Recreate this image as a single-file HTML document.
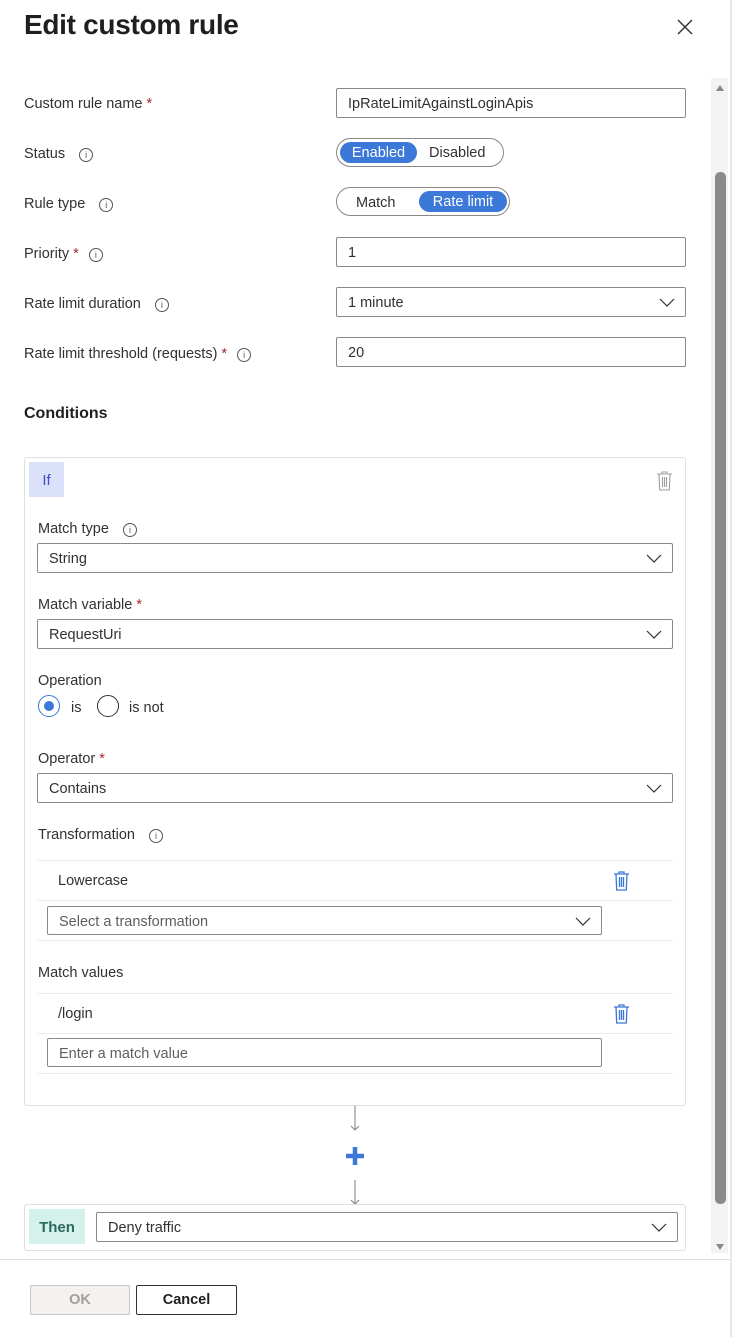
<!DOCTYPE html>
<html><head><style>
*{box-sizing:border-box;margin:0;padding:0}
body{width:732px;height:1337px;background:#fff;font-family:"Liberation Sans",sans-serif;color:#323130;position:relative;overflow:hidden;font-size:14px}
.a{position:absolute}
.lbl{position:absolute;left:24px;font-size:14.5px;color:#323130}
.req{color:#a4262c}
.info{display:inline-block;width:14px;height:14px;border:1px solid #555;border-radius:50%;font-size:9px;line-height:12px;text-align:center;vertical-align:0px;margin-left:10px;color:#555}
.inp{position:absolute;border:1px solid #8a8886;border-radius:2px;background:#fff;font-size:14.5px;padding-left:11px;padding-top:2px;display:flex;align-items:center;color:#323130}
.chev{position:absolute;right:10px;top:50%;margin-top:-7px}
.ph{color:#605e5c}
.hr{position:absolute;height:1px;background:#edebe9}
.trash{position:absolute}
</style></head><body>
<div class="a" style="left:24px;top:9px;font-size:28px;font-weight:bold;color:#201f1e;letter-spacing:-0.3px">Edit custom rule</div>
<svg class="a" style="left:677px;top:19px" width="16" height="16"><path d="M1 1L15 15M15 1L1 15" stroke="#323130" stroke-width="1.4"/></svg>

<div class="a" style="left:711px;top:78px;width:17px;height:1175px;background:#f3f3f3"></div>
<div class="a" style="left:715px;top:172px;width:11px;height:1032px;background:#8a8a8a;border-radius:5px"></div>
<svg class="a" style="left:715px;top:84px" width="10" height="8"><path d="M1 7L5 1L9 7Z" fill="#888"/></svg>
<svg class="a" style="left:715px;top:1243px" width="10" height="8"><path d="M1 1L5 7L9 1Z" fill="#888"/></svg>

<div class="lbl" style="top:96px">Custom rule name <span class="req">*</span></div>
<div class="inp" style="left:336px;top:88px;width:350px;height:30px">IpRateLimitAgainstLoginApis</div>

<div class="lbl" style="top:146px">Status <span class="info">i</span></div>
<div class="a" style="left:336px;top:138px;width:168px;height:29px;border:1px solid #8a8886;border-radius:15px"></div>
<div class="a" style="left:340px;top:142px;width:77px;height:21px;background:#3b78d8;border-radius:11px;color:#fff;font-size:14.5px;text-align:center;line-height:22px">Enabled</div>
<div class="a" style="left:429px;top:145px;font-size:14.5px">Disabled</div>

<div class="lbl" style="top:196px">Rule type <span class="info">i</span></div>
<div class="a" style="left:336px;top:187px;width:174px;height:29px;border:1px solid #8a8886;border-radius:15px"></div>
<div class="a" style="left:356px;top:195px;font-size:14.5px">Match</div>
<div class="a" style="left:419px;top:191px;width:88px;height:21px;background:#3b78d8;border-radius:11px;color:#fff;font-size:14.5px;text-align:center;line-height:22px">Rate limit</div>

<div class="lbl" style="top:246px">Priority <span class="req">*</span> <span class="info" style="margin-left:6px">i</span></div>
<div class="inp" style="left:336px;top:237px;width:350px;height:30px">1</div>

<div class="lbl" style="top:296px">Rate limit duration <span class="info">i</span></div>
<div class="inp" style="left:336px;top:287px;width:350px;height:30px">1 minute<svg class="chev" width="16" height="14"><path d="M1 4L8 11L15 4" fill="none" stroke="#323130" stroke-width="1.2"/></svg></div>

<div class="lbl" style="top:346px">Rate limit threshold (requests) <span class="req">*</span> <span class="info" style="margin-left:6px">i</span></div>
<div class="inp" style="left:336px;top:337px;width:350px;height:30px">20</div>

<div class="a" style="left:24px;top:405px;font-size:16px;font-weight:bold;color:#201f1e">Conditions</div>

<div class="a" style="left:24px;top:457px;width:662px;height:649px;border:1px solid #e1dfdd;border-radius:3px"></div>
<div class="a" style="left:29px;top:462px;width:35px;height:35px;background:#dbe1fa;color:#3b4fc4;font-size:15px;line-height:37px;text-align:center">If</div>
<svg class="trash" style="left:656px;top:471px" width="17" height="20"><path d="M1 3H16M6 3V1H11V3M3 3L3.7 19H13.3L14 3M6.5 6V16M8.5 6V16M10.5 6V16" fill="none" stroke="#a19f9d" stroke-width="1.1"/></svg>

<div class="a" style="left:38px;top:521px;font-size:14.5px">Match type <span class="info">i</span></div>
<div class="inp" style="left:37px;top:543px;width:636px;height:30px">String<svg class="chev" width="16" height="14"><path d="M1 4L8 11L15 4" fill="none" stroke="#323130" stroke-width="1.2"/></svg></div>

<div class="a" style="left:38px;top:597px;font-size:14.5px">Match variable <span class="req">*</span></div>
<div class="inp" style="left:37px;top:619px;width:636px;height:30px">RequestUri<svg class="chev" width="16" height="14"><path d="M1 4L8 11L15 4" fill="none" stroke="#323130" stroke-width="1.2"/></svg></div>

<div class="a" style="left:38px;top:673px;font-size:14.5px">Operation</div>
<div class="a" style="left:38px;top:695px;width:22px;height:22px;border:1px solid #3b78d8;border-radius:50%"></div>
<div class="a" style="left:44px;top:701px;width:10px;height:10px;background:#3b78d8;border-radius:50%"></div>
<div class="a" style="left:71px;top:700px;font-size:14.5px">is</div>
<div class="a" style="left:97px;top:695px;width:22px;height:22px;border:1px solid #323130;border-radius:50%"></div>
<div class="a" style="left:129px;top:700px;font-size:14.5px">is not</div>

<div class="a" style="left:38px;top:751px;font-size:14.5px">Operator <span class="req">*</span></div>
<div class="inp" style="left:37px;top:773px;width:636px;height:30px">Contains<svg class="chev" width="16" height="14"><path d="M1 4L8 11L15 4" fill="none" stroke="#323130" stroke-width="1.2"/></svg></div>

<div class="a" style="left:38px;top:827px;font-size:14.5px">Transformation <span class="info">i</span></div>
<div class="hr" style="left:37px;top:860px;width:636px"></div>
<div class="a" style="left:58px;top:873px;font-size:14.5px">Lowercase</div>
<svg class="trash" style="left:613px;top:871px" width="17" height="20"><path d="M1 3H16M6 3V1H11V3M3 3L3.7 19H13.3L14 3M6.5 6V16M8.5 6V16M10.5 6V16" fill="none" stroke="#3b78d8" stroke-width="1.3"/></svg>
<div class="hr" style="left:37px;top:900px;width:636px"></div>
<div class="inp" style="left:47px;top:906px;width:555px;height:29px"><span class="ph">Select a transformation</span><svg class="chev" width="16" height="14"><path d="M1 4L8 11L15 4" fill="none" stroke="#323130" stroke-width="1.2"/></svg></div>
<div class="hr" style="left:37px;top:940px;width:636px"></div>

<div class="a" style="left:38px;top:965px;font-size:14.5px">Match values</div>
<div class="hr" style="left:37px;top:993px;width:636px"></div>
<div class="a" style="left:58px;top:1006px;font-size:14.5px">/login</div>
<svg class="trash" style="left:613px;top:1004px" width="17" height="20"><path d="M1 3H16M6 3V1H11V3M3 3L3.7 19H13.3L14 3M6.5 6V16M8.5 6V16M10.5 6V16" fill="none" stroke="#3b78d8" stroke-width="1.3"/></svg>
<div class="hr" style="left:37px;top:1033px;width:636px"></div>
<div class="inp" style="left:47px;top:1038px;width:555px;height:29px"><span class="ph">Enter a match value</span></div>
<div class="hr" style="left:37px;top:1073px;width:636px"></div>

<svg class="a" style="left:348px;top:1106px" width="14" height="26"><path d="M7 0V24M3 20L7 24L11 20" fill="none" stroke="#888" stroke-width="1.1"/></svg>
<svg class="a" style="left:345px;top:1146px" width="20" height="20"><path d="M10 1V19M1 10H19" stroke="#3b78d8" stroke-width="4.5"/></svg>
<svg class="a" style="left:348px;top:1180px" width="14" height="26"><path d="M7 0V24M3 20L7 24L11 20" fill="none" stroke="#888" stroke-width="1.1"/></svg>

<div class="a" style="left:24px;top:1204px;width:662px;height:47px;border:1px solid #e1dfdd;border-radius:3px"></div>
<div class="a" style="left:29px;top:1209px;width:56px;height:35px;background:#d5f1ec;color:#2a6b5e;font-size:15px;font-weight:bold;line-height:37px;text-align:center">Then</div>
<div class="inp" style="left:96px;top:1212px;width:582px;height:30px">Deny traffic<svg class="chev" width="16" height="14"><path d="M1 4L8 11L15 4" fill="none" stroke="#323130" stroke-width="1.2"/></svg></div>

<div class="hr" style="left:0;top:1259px;width:732px;background:#e1dfdd"></div>
<div class="a" style="left:30px;top:1285px;width:100px;height:30px;background:#f3f2f1;border:1px solid #c8c6c4;border-radius:2px;color:#a19f9d;font-size:14.5px;font-weight:bold;text-align:center;line-height:29px">OK</div>
<div class="a" style="left:136px;top:1285px;width:101px;height:30px;border:1px solid #323130;border-radius:2px;color:#201f1e;font-size:14.5px;font-weight:bold;text-align:center;line-height:29px">Cancel</div>
<div class="a" style="left:730px;top:0;width:2px;height:1337px;background:#e8e8e8"></div>
</body></html>
